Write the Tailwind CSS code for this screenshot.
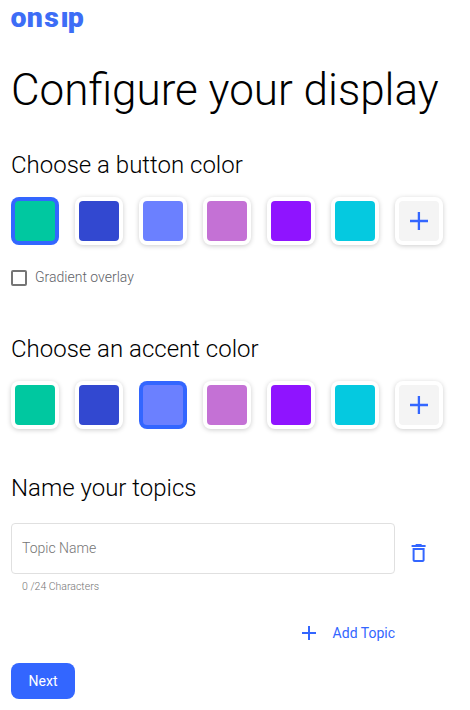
<!DOCTYPE html>
<html lang="en">
<head>
<meta charset="utf-8">
<title>Configure your display</title>
<script src="https://cdn.jsdelivr.net/npm/@tailwindcss/browser@4"></script>
</head>
<body class="bg-white text-black font-['Roboto',sans-serif] font-light">
<main class="flex flex-col w-[470px] h-[710px] pl-[11px] overflow-hidden">
  <svg class="block shrink-0 text-[#3d6df6] -ml-[11px]" width="100" height="36" viewBox="0 0 100 36" role="img" aria-label="onsip">
    <text x="10.500 26.700 44.300 60.500 67.700" y="27" font-family="Roboto, sans-serif" font-weight="900" font-size="28.500" fill="currentColor">onsıp</text>
  </svg>
  <h1 class="mt-[30px] text-[44px] leading-[48px] whitespace-nowrap">Configure your display</h1>

  <section class="mt-[35px]">
    <h2 class="text-[24px] leading-8">Choose a button color</h2>
    <div class="mt-4 flex gap-4">
      <button class="size-12 p-1 rounded-lg bg-[#3366ff]"><span class="block size-10 rounded bg-[#00c8a0]"></span></button>
      <button class="size-12 p-1 rounded-lg bg-white shadow-[0_1px_5px_rgba(0,0,0,0.2)]"><span class="block size-10 rounded bg-[#3248d0]"></span></button>
      <button class="size-12 p-1 rounded-lg bg-white shadow-[0_1px_5px_rgba(0,0,0,0.2)]"><span class="block size-10 rounded bg-[#6b80ff]"></span></button>
      <button class="size-12 p-1 rounded-lg bg-white shadow-[0_1px_5px_rgba(0,0,0,0.2)]"><span class="block size-10 rounded bg-[#c471d5]"></span></button>
      <button class="size-12 p-1 rounded-lg bg-white shadow-[0_1px_5px_rgba(0,0,0,0.2)]"><span class="block size-10 rounded bg-[#8f14ff]"></span></button>
      <button class="size-12 p-1 rounded-lg bg-white shadow-[0_1px_5px_rgba(0,0,0,0.2)]"><span class="block size-10 rounded bg-[#05c9e0]"></span></button>
      <button class="size-12 p-1 rounded-lg bg-white shadow-[0_1px_5px_rgba(0,0,0,0.2)]"><span class="flex items-center justify-center size-10 rounded bg-[#f4f4f4] text-[#3366ff]"><svg width="18" height="18" viewBox="0 0 18 18" fill="none" stroke="currentColor" stroke-width="2.300"><path d="M8.900 0v18M0 9h18"/></svg></span></button>
    </div>
    <label class="mt-[22px] flex items-center h-5 text-[14px] leading-5 text-[#5f6368]"><span class="relative top-px size-4 border-2 border-[#757575] rounded-[2px] mr-2"></span>Gradient overlay</label>
  </section>

  <section class="mt-[46px]">
    <h2 class="text-[24px] leading-8">Choose an accent color</h2>
    <div class="mt-4 flex gap-4">
      <button class="size-12 p-1 rounded-lg bg-white shadow-[0_1px_5px_rgba(0,0,0,0.2)]"><span class="block size-10 rounded bg-[#00c8a0]"></span></button>
      <button class="size-12 p-1 rounded-lg bg-white shadow-[0_1px_5px_rgba(0,0,0,0.2)]"><span class="block size-10 rounded bg-[#3248d0]"></span></button>
      <button class="size-12 p-1 rounded-lg bg-[#3366ff]"><span class="block size-10 rounded bg-[#6b80ff]"></span></button>
      <button class="size-12 p-1 rounded-lg bg-white shadow-[0_1px_5px_rgba(0,0,0,0.2)]"><span class="block size-10 rounded bg-[#c471d5]"></span></button>
      <button class="size-12 p-1 rounded-lg bg-white shadow-[0_1px_5px_rgba(0,0,0,0.2)]"><span class="block size-10 rounded bg-[#8f14ff]"></span></button>
      <button class="size-12 p-1 rounded-lg bg-white shadow-[0_1px_5px_rgba(0,0,0,0.2)]"><span class="block size-10 rounded bg-[#05c9e0]"></span></button>
      <button class="size-12 p-1 rounded-lg bg-white shadow-[0_1px_5px_rgba(0,0,0,0.2)]"><span class="flex items-center justify-center size-10 rounded bg-[#f4f4f4] text-[#3366ff]"><svg width="18" height="18" viewBox="0 0 18 18" fill="none" stroke="currentColor" stroke-width="2.300"><path d="M8.900 0v18M0 9h18"/></svg></span></button>
    </div>
  </section>

  <section class="mt-[43px] w-[432px]">
    <h2 class="text-[24px] leading-8">Name your topics</h2>
    <div class="mt-[19px] flex items-center">
      <div class="w-[384px] h-[51px] border border-[#e0e0e0] rounded flex items-center pl-[10px] text-[14px] text-[#757575]">Topic Name</div>
      <button class="ml-3 mt-[9px] size-6 text-[#3366ff]"><svg width="24" height="24" viewBox="0.400 0 24 24" fill="currentColor"><path d="M6 19c0 1.1.9 2 2 2h8c1.1 0 2-.9 2-2V7H6v12zM8 9h8v10H8V9zm7.500-5l-1-1h-5l-1 1H5v2h14V4z"/></svg></button>
    </div>
    <p class="mt-[6px] pl-[11px] text-[10.500px] leading-[14px] text-[#757575]">0 /24 Characters</p>
    <div class="mt-[29px] w-[384px] flex justify-end">
      <button class="flex items-center gap-[17px] h-5 text-[14px] font-normal text-[#3366ff]"><svg width="14" height="14" viewBox="0 0 14 14" fill="none" stroke="currentColor" stroke-width="2"><path d="M7 0v14M0 7h14"/></svg>Add Topic</button>
    </div>
  </section>
  <button class="mt-5 w-16 h-9 shrink-0 rounded-lg bg-[#3366ff] text-white text-[14px] font-normal">Next</button>
</main>
</body>
</html>
